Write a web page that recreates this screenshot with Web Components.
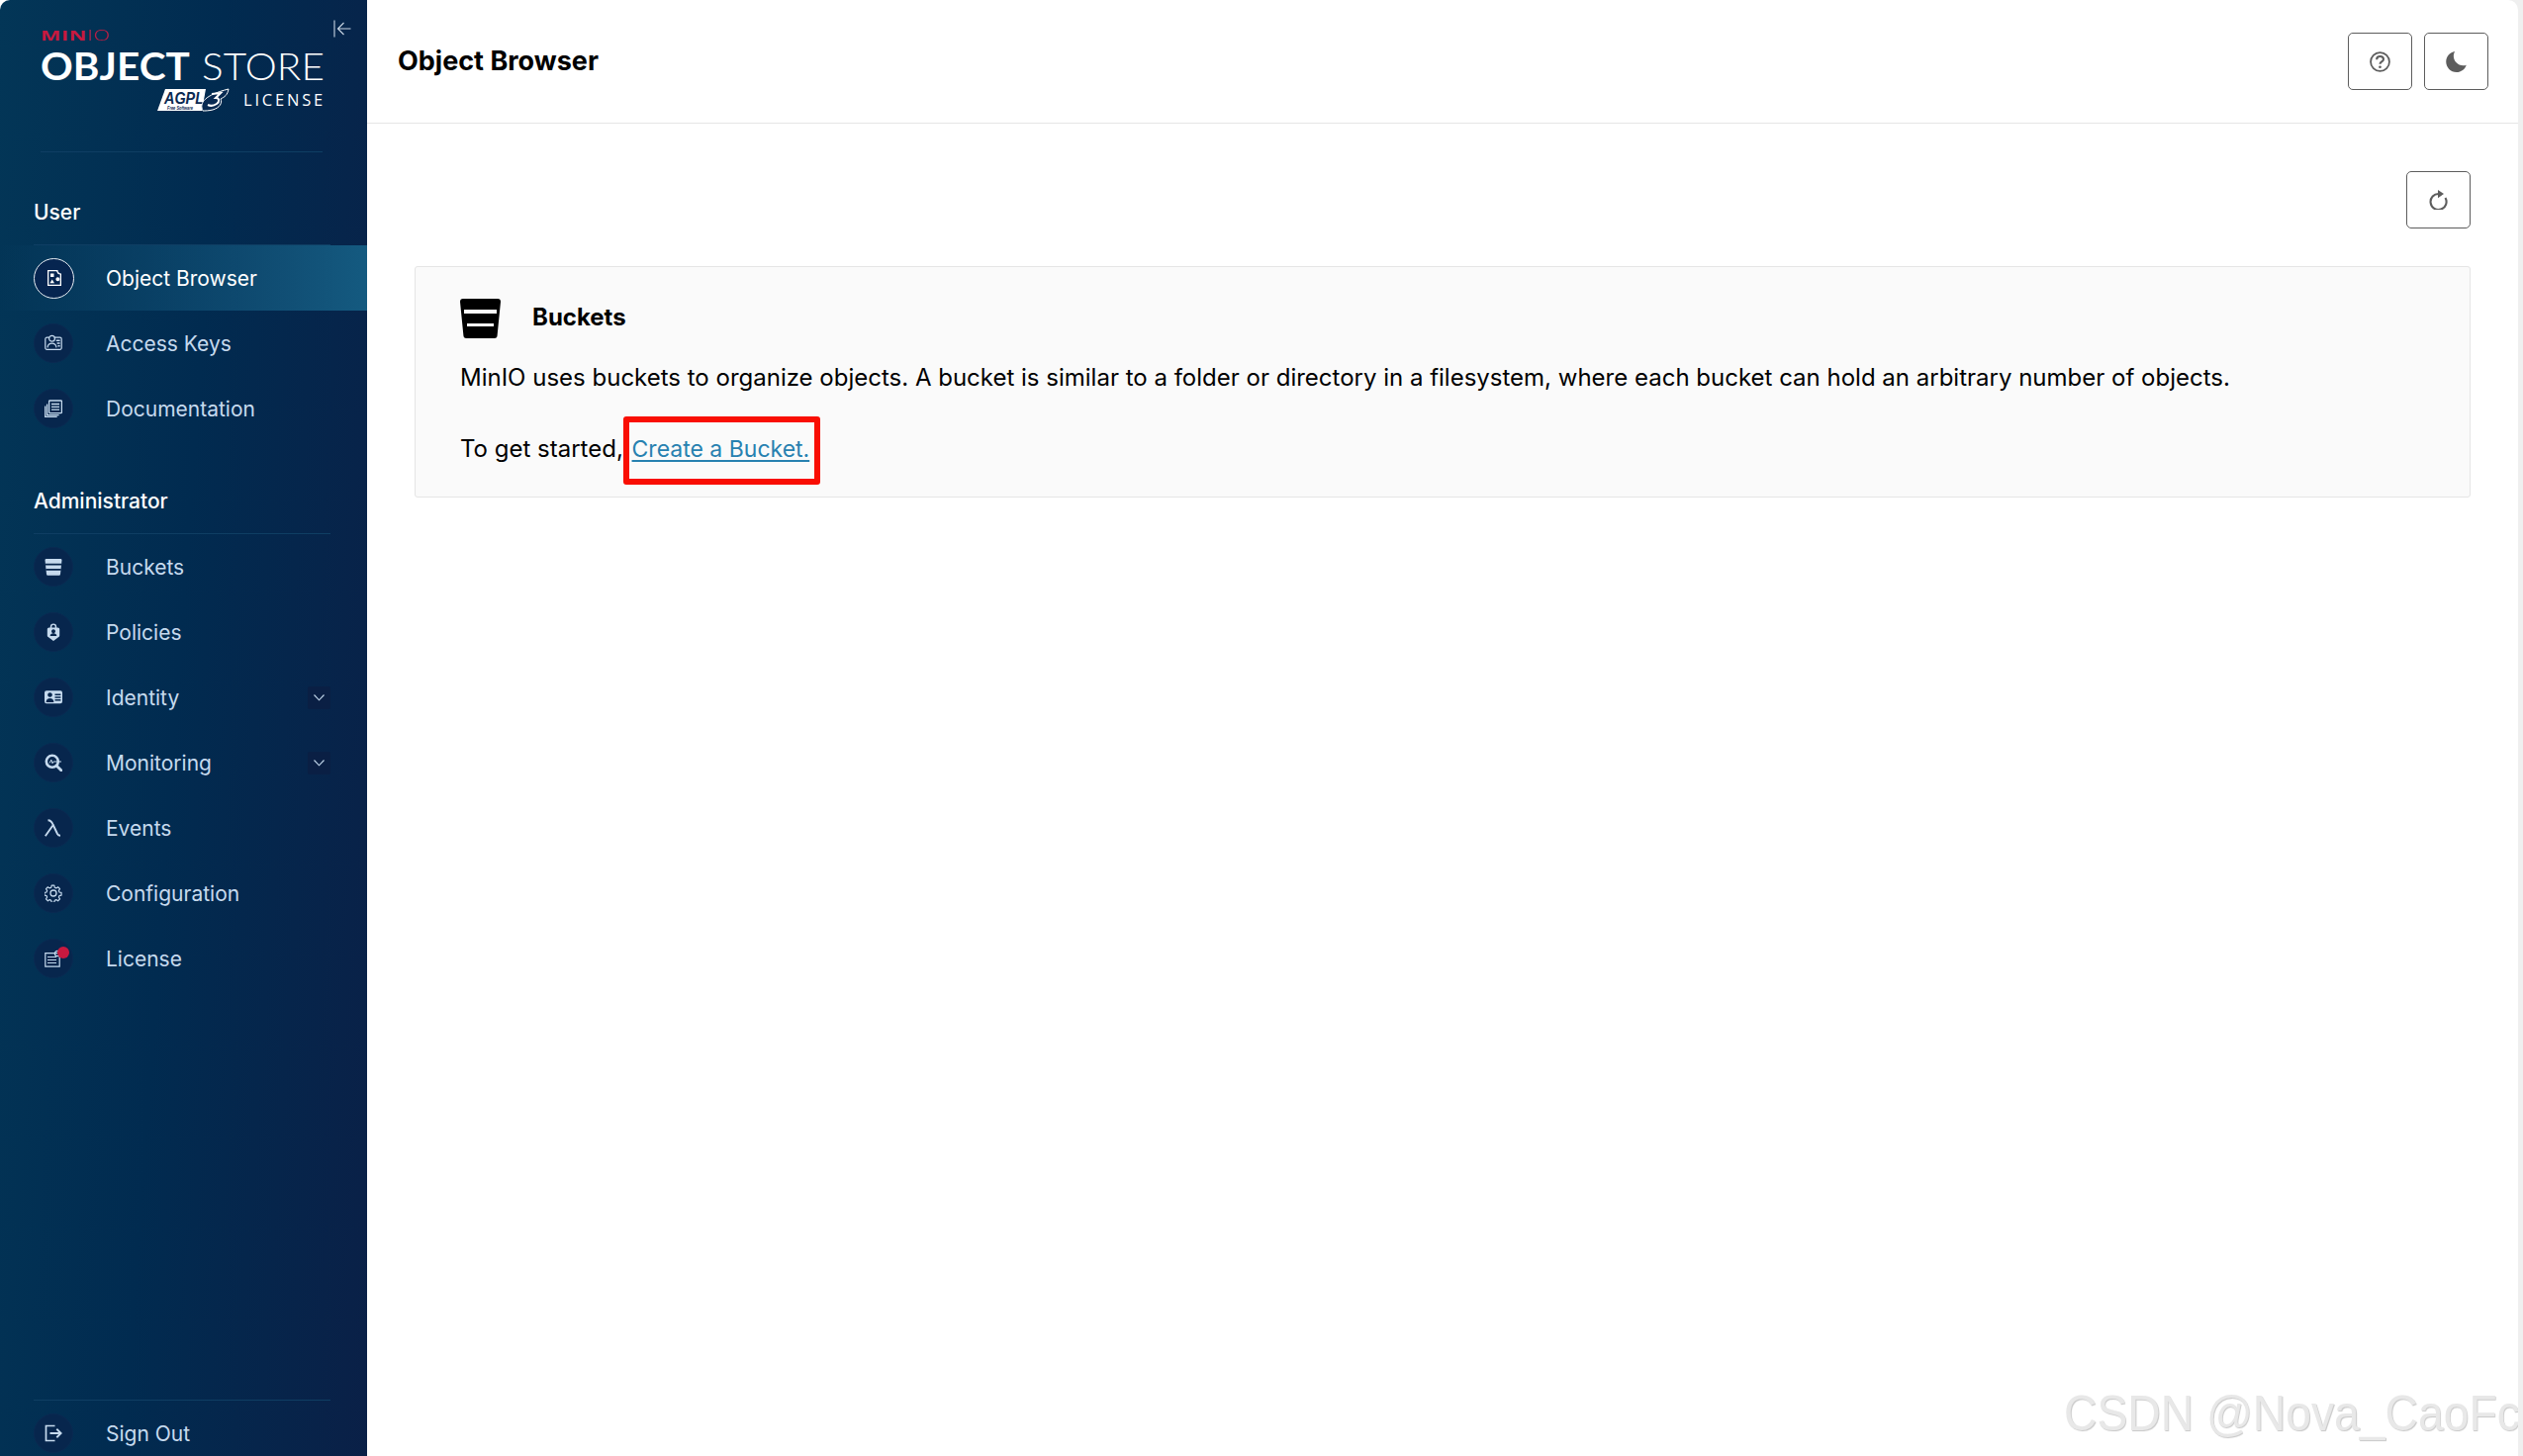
<!DOCTYPE html>
<html lang="en"><head><meta charset="utf-8"><title>MinIO Console</title>
<style>
html,body{margin:0;height:100%;background:linear-gradient(90deg,#fff 50%,#efefef 50%);overflow:hidden;font-family:Inter,"Liberation Sans",sans-serif}
</style></head><body>
<mc-app>
  <mc-sidebar slot="side">
    <mc-logo></mc-logo>
    <mc-section label="User" first>
      <mc-nav label="Object Browser" icon="browser" active></mc-nav>
      <mc-nav label="Access Keys" icon="keys"></mc-nav>
      <mc-nav label="Documentation" icon="docs"></mc-nav>
    </mc-section>
    <mc-section label="Administrator">
      <mc-nav label="Buckets" icon="bucket"></mc-nav>
      <mc-nav label="Policies" icon="policy"></mc-nav>
      <mc-nav label="Identity" icon="identity" expand></mc-nav>
      <mc-nav label="Monitoring" icon="monitor" expand></mc-nav>
      <mc-nav label="Events" icon="lambda"></mc-nav>
      <mc-nav label="Configuration" icon="gear"></mc-nav>
      <mc-nav label="License" icon="license" dot></mc-nav>
    </mc-section>
    <mc-section label="" slot="foot" foot>
      <mc-nav label="Sign Out" icon="signout"></mc-nav>
    </mc-section>
  </mc-sidebar>
  <mc-header title="Object Browser"></mc-header>
  <mc-content>
    <mc-icon-button icon="refresh" slot="actions"></mc-icon-button>
    <mc-card heading="Buckets">
      <p>MinIO uses buckets to organize objects. A bucket is similar to a folder or directory in a filesystem, where each bucket can hold an arbitrary number of objects.</p>
      <p class="start">To get started,&nbsp;<mc-link>Create a Bucket.</mc-link></p>
    </mc-card>
  </mc-content>
  <mc-watermark>CSDN @Nova_CaoFc</mc-watermark>
</mc-app>
<script>
const ICONS={
browser:`<path fill-rule="evenodd" d="M2 1h10.500a3.200 3.200 0 0 0 3.500 3.500V17H2zM3.300 2.300V15.700H14.700V5.600A4.500 4.500 0 0 1 11 2.300z"/><path d="M5 4.500h3.500V8H5zM12.400 8.200a2 2 0 1 1-.01 0zM6.700 10.500l2.300 3.800H4.400z"/>`,
keys:`<g fill="none" stroke="currentColor" stroke-width="1.200"><path d="M5.200 3.200H2.400A1.600 1.600 0 0 0 .8 4.800v9A1.600 1.600 0 0 0 2.400 15.400h13.200a1.600 1.600 0 0 0 1.600-1.600v-9a1.600 1.600 0 0 0-1.600-1.600H9.800"/><circle cx="7.500" cy="4.200" r="2.900"/><path d="M3 13.400c.3-3 2.200-4.200 4.500-4.200s4.200 1.200 4.500 4.200"/></g><path d="M11.800 5.500h3.800v1.500h-3.800zM12.600 8.300h3v1.500h-3zM13.400 11.100h2.200v1.500h-2.200z"/>`,
docs:`<g fill="none" stroke="currentColor" stroke-width="1.300"><rect x="4.600" y="1" width="12.800" height="12.600" rx=".8"/><path d="M7 4.500h8M7 7.300h8M7 10.100h8"/><path d="M2.600 4.500v11.200h12M.7 6.500v10.900h12"/></g>`,
bucket:`<path d="M.5 2.300A1.300 1.300 0 0 1 1.800 1h14.400a1.300 1.300 0 0 1 1.300 1.300L16 16.500a1.300 1.300 0 0 1-1.300 1.200H3.300A1.300 1.300 0 0 1 2 16.500z"/><path d="M1 5.700h16v1.800H1zM1.300 10.900h15.400v1.800H1.300z" fill="#07264d"/>`,
policy:`<path fill-rule="evenodd" d="M5.800 4.400V3.600a3.200 3.200 0 0 1 6.400 0v.8h1.200c1 0 1.800.8 1.800 1.800v6.300c0 .7-.3 1.200-.9 1.600L9 18l-5.300-3.900c-.6-.4-.9-.9-.9-1.600V6.200c0-1 .8-1.800 1.800-1.800zM7.300 4.400h3.400v-.9a1.700 1.700 0 0 0-3.400 0zM9 6.300a2 2 0 1 0 .01 0zM5.700 13h6.600c0-1.800-1.400-2.800-3.300-2.800S5.700 11.200 5.700 13z"/>`,
identity:`<path fill-rule="evenodd" d="M2 2.300h14a2 2 0 0 1 2 2v9a2 2 0 0 1-2 2H2a2 2 0 0 1-2-2v-9a2 2 0 0 1 2-2zM5.500 4.200a2.300 2.300 0 1 0 .01 0zM1.600 14h7.800c0-2.500-1.700-4-3.900-4s-3.900 1.500-3.900 4zM10.500 5.600v1.500h5.900V5.600zM10.500 8.300v1.500h5.900V8.300zM10.500 11v1.500h5.900V11z"/>`,
monitor:`<g fill="none" stroke="currentColor"><circle cx="7.800" cy="7.800" r="6" stroke-width="2.600"/><path d="M12.500 12.500l4.300 4.300" stroke-width="2.800" stroke-linecap="round"/><path d="M5.200 9.400l1.600-3.300 1.200 3.600 1-1.700h8" stroke-width="1"/></g>`,
lambda:`<path fill="none" stroke="currentColor" stroke-width="1.900" d="M3.500 1.200c3 0 3.800 1.400 5 4.300L13 15c.7 1.300 1.500 1.700 3 1.700M.8 17.200 8.200 6.700"/>`,
gear:`<path fill="none" stroke="currentColor" stroke-width="1.300" stroke-linejoin="round" d="M7.500.8h3l.5 2.400 1.600.7 2.100-1.300 2.100 2.100-1.300 2.100.7 1.600 2.300.5v3l-2.300.5-.7 1.600 1.300 2.100-2.100 2.100-2.100-1.300-1.600.7-.5 2.300h-3l-.5-2.300-1.600-.7-2.100 1.300-2.100-2.100 1.300-2.100-.7-1.600-2.300-.5v-3l2.300-.5.7-1.600-1.300-2.100 2.100-2.100 2.100 1.300 1.600-.7z" transform="translate(.4 .4) scale(.9)"/><circle cx="9" cy="9" r="3" fill="none" stroke="currentColor" stroke-width="1.300"/>`,
license:`<g fill="none" stroke="currentColor" stroke-width="1.200"><path d="M13 3.600H.8v13.600h14.400V7"/><path d="M3 7.500h9M3 10.500h9M3 13.500h9"/><circle cx="13" cy="4" r="2.600"/></g>`,
signout:`<path fill="none" stroke="currentColor" stroke-width="1.700" d="M10.500 1.500H1.500v15h9"/><path fill="none" stroke="currentColor" stroke-width="1.900" d="M5.500 9h11M12.300 4.800 16.600 9l-4.300 4.200"/>`,
help:`<circle cx="10" cy="10" r="9" fill="none" stroke="currentColor" stroke-width="1.700"/><path fill="none" stroke="currentColor" stroke-width="2" d="M6.800 7.800c0-2 1.500-3 3.300-3s3.200 1 3.200 2.700c0 2.500-3.300 2.400-3.300 4.600"/><circle cx="10" cy="15" r="1.300"/>`,
moon:`<path d="M8.700 0C3.700.8 0 5 0 10.200 0 15.800 4.600 20.500 10.300 20.500c4.500 0 8.400-3 9.700-7.100-1 .4-2 .6-3.100.6-5.300 0-9.500-4.300-9.500-9.500 0-1.600.5-3.200 1.300-4.500z"/>`,
refresh:`<path fill="none" stroke="currentColor" stroke-width="2.100" d="M16.500 8A8 8 0 1 1 10 4"/><path d="M9 0l6 4-6 4.200z"/>`
};
function svg(name,w,h,vb){return `<svg part="i" width="${w}" height="${h||w}" viewBox="${vb||'0 0 18 18'}" fill="currentColor" aria-hidden="true">${ICONS[name]}</svg>`}
function def(tag,cls){customElements.define(tag,cls)}
function shadow(el,html){el.attachShadow({mode:'open'}).innerHTML=html}

def('mc-app',class extends HTMLElement{constructor(){super();shadow(this,`<style>
:host{display:grid;grid-template-columns:371px 1fr;grid-template-rows:125px 1fr;width:2545px;height:100vh;background:#fff;border-radius:10px 10px 0 0;overflow:hidden;position:relative;color:#000}
::slotted(mc-sidebar){grid-row:1/3}
</style><slot name="side"></slot><slot></slot>`)}});

def('mc-sidebar',class extends HTMLElement{constructor(){super();shadow(this,`<style>
:host{display:flex;flex-direction:column;height:1472px;box-sizing:border-box;background:linear-gradient(94deg,#033657 0%,#012b50 48%,#0a2047 100%);position:relative}
.grow{flex:1}
.collapse{position:absolute;left:337px;top:20px;color:#c9d6e4;line-height:0}
</style><div class="collapse"><svg width="18" height="18" viewBox="0 0 18 18" fill="none" stroke="currentColor" stroke-width="1.100"><path d="M1 .5v17M17.500 9H4.500M10.500 3 4.500 9l6 6"/></svg></div>
<slot></slot><div class="grow"></div><slot name="foot"></slot>`)}});

def('mc-logo',class extends HTMLElement{constructor(){super();shadow(this,`<style>
:host{display:block;height:154px;box-sizing:border-box;position:relative;margin:0 41px}
:host::after{content:"";position:absolute;left:0;top:153px;height:1px;background:#0f3e63;width:285px}
.wrap{display:flex;flex-direction:column;width:286px;padding-top:29px;color:#fff}
.minio{font:700 15.500px/14px "Open Sans",sans-serif;color:#c8193f;letter-spacing:.5px;display:flex;transform-origin:0 0;transform:scaleX(1.390) scaleY(.92)}
.minio span{font-weight:300;letter-spacing:.5px}
.os{font:700 38px/30px Lato,sans-serif;white-space:nowrap;margin-top:8px;transform-origin:0 0;transform:scaleX(1.065);letter-spacing:.1px}
.os span{font-weight:300;margin-left:1px}
.lic{display:flex;justify-content:flex-end;align-items:center;gap:14px;margin-top:8px;height:24px}
.lic b{font:400 16.500px/20px "Open Sans",sans-serif;letter-spacing:2.800px;margin-right:-2px}
svg{display:block}
</style><div class="wrap">
<div class="minio">MIN<span>IO</span></div>
<div class="os">OBJECT<span> STORE</span></div>
<div class="lic"><svg width="73" height="24" viewBox="0 0 73 24"><path d="M8 1h41l-4 22H0z" fill="#fff"/><text x="7" y="16" font-family="Liberation Sans" font-style="italic" font-weight="700" font-size="17" fill="#0b2a52" textLength="40" lengthAdjust="spacingAndGlyphs">AGPL</text><text x="10" y="22" font-family="Liberation Sans" font-style="italic" font-weight="700" font-size="5" fill="#0b2a52" textLength="26" lengthAdjust="spacingAndGlyphs">Free Software</text><path d="M46 23C42 15 48 7 72 1c-1 6-4 8-8 10 2 4-1 9-8 11-4 1-8 1-10 1z" fill="#082a52" stroke="#fff" stroke-width="1"/><path d="M55 6l9-1-5 5c4 0 4 4 1 6-3 2-7 2-9 1" fill="none" stroke="#fff" stroke-width="2"/></svg><b>LICENSE</b></div>
</div>`)}});

def('mc-section',class extends HTMLElement{constructor(){super();const l=this.getAttribute('label');shadow(this,`<style>
:host{display:block;margin:0 0 48px}
.t{font:500 21px/24px Inter,sans-serif;color:#fff;margin:0 37px 0 34px;padding:1px 0 20px;border-bottom:1px solid #0f3e63;height:24px}
:host([first]) .t{padding-top:49px;padding-bottom:20px}
:host([foot]){margin:0 0 -10px}
:host([foot]) .t{padding:0;height:0}
.list{display:flex;flex-direction:column}
</style><div class="t">${l}</div><div class="list"><slot></slot></div>`)}});

def('mc-nav',class extends HTMLElement{constructor(){super();const l=this.getAttribute('label'),ic=this.getAttribute('icon');shadow(this,`<style>
:host{display:flex;align-items:center;height:66px;padding:0 37px 0 34px;color:#c6daee;font:400 21px/24px Inter,sans-serif;position:relative}
:host([active]){color:#fff;background:linear-gradient(90deg,rgba(20,90,128,0) 0%,#145a80 100%)}
.c{width:40px;height:40px;box-sizing:border-box;border-radius:50%;background:#07264d;border:1px solid #0a2a52;display:flex;align-items:center;justify-content:center;margin-right:33px;position:relative;flex:none}
:host([active]) .c{border:1.500px solid #e8eef4;background:#062550;width:41px;height:41px;margin-right:32px}
.dot{position:absolute;left:23px;top:7px;width:12px;height:12px;border-radius:50%;background:#c8193f;display:none}
:host([dot]) .dot{display:block}
.l{flex:1;padding-top:1px}
.x{width:23px;height:23px;background:#0a1f44;border-radius:2px;display:none;align-items:center;justify-content:center;color:#c6daee}
:host([expand]) .x{display:flex}
</style><div class="c">${svg(ic,18)}<span class="dot"></span></div><span class="l">${l}</span><span class="x"><svg width="11" height="7" viewBox="0 0 11 7" fill="none" stroke="currentColor" stroke-width="1.100"><path d="M.5.500 5.500 5.800 10.500.500"/></svg></span>`)}});

def('mc-header',class extends HTMLElement{constructor(){super();shadow(this,`<style>
:host{display:flex;align-items:center;height:125px;box-sizing:border-box;border-bottom:1px solid #e5e5e5;padding:0 30px 0 31px;gap:12px}
h1{font:700 27px/32px Inter,sans-serif;margin:0;flex:1}
</style><h1>${this.getAttribute('title')}</h1><mc-icon-button icon="help"></mc-icon-button><mc-icon-button icon="moon"></mc-icon-button>`)}});

def('mc-icon-button',class extends HTMLElement{constructor(){super();const ic=this.getAttribute('icon');const s={help:[21,'0 0 20 20'],moon:[21,'0 0 20 20.500'],refresh:[20,'0 0 20 20']}[ic];shadow(this,`<style>
:host{display:inline-flex;width:65px;height:58px;border:1px solid #5d5d5d;border-radius:5px;align-items:center;justify-content:center;color:#5d5d5d;box-sizing:border-box;background:#fff}
</style>${svg(ic,s[0],s[0],s[1])}`)}});

def('mc-content',class extends HTMLElement{constructor(){super();shadow(this,`<style>
:host{display:block;padding:48px 48px 0 48px}
.a{display:flex;justify-content:flex-end;margin-bottom:38px}
</style><div class="a"><slot name="actions"></slot></div><slot></slot>`)}});

def('mc-card',class extends HTMLElement{constructor(){super();shadow(this,`<style>
:host{display:block;height:234px;box-sizing:border-box;background:#fafafa;border:1px solid #e5e5e5;border-radius:3px;padding:30px 46px 0 45px;position:relative;font:400 24px/32px Inter,sans-serif}
.h{display:flex;align-items:center;gap:32px;height:42px}
h2{font:700 24px/30px Inter,sans-serif;margin:0}
::slotted(p){margin:0;font:inherit}
.body{margin-top:24px;display:flex;flex-direction:column;gap:40px}
svg{display:block}
</style><div class="h"><svg width="41" height="41" viewBox="0 0 41 41"><path d="M0 4a3 3 0 0 1 3-3h35a3 3 0 0 1 3 3l-3.400 34a3 3 0 0 1-3 3H6.400a3 3 0 0 1-3-3z" fill="#000"/><path d="M4 12h33v4H4zM7 26h27v3H7z" fill="#fafafa"/></svg><h2>${this.getAttribute('heading')}</h2></div><div class="body"><slot></slot></div>`)}});

def('mc-link',class extends HTMLElement{constructor(){super();shadow(this,`<style>
:host{display:inline;position:relative;color:#2781b0;font-size:23px;margin-left:2px;text-decoration:underline;text-underline-offset:3px}
.box{position:absolute;left:-9px;top:-19px;width:199px;height:69px;box-sizing:border-box;border:6px solid #f90e03;border-radius:3px}
</style><slot></slot><span class="box"></span>`)}});

def('mc-watermark',class extends HTMLElement{constructor(){super();shadow(this,`<style>
:host{position:absolute;left:2086px;top:1397px;font:400 50px/64px "Liberation Sans",sans-serif;color:#e8e8e8;white-space:nowrap;text-shadow:1px 1px 1px #c8c8c8;transform-origin:0 0;transform:scaleX(.925)}
</style><slot></slot>`)}});
</script>
</body></html>
